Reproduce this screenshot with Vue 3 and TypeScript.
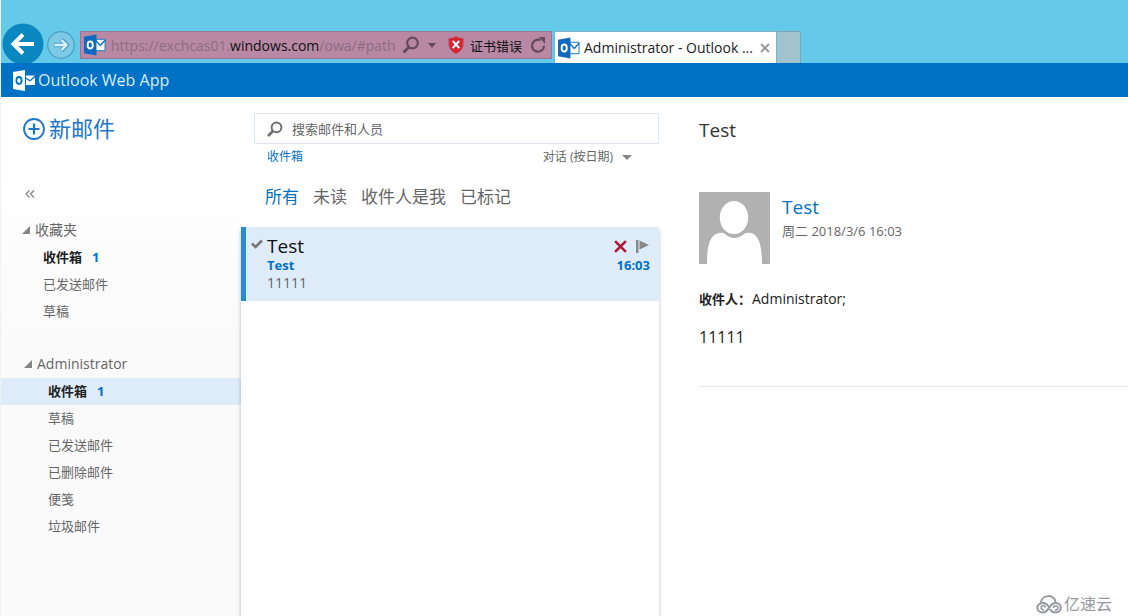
<script setup lang="ts">
import { ref } from 'vue'

interface Folder {
  name: string
  unread?: number
  selected?: boolean
}

interface FolderGroup {
  title: string
  kind: string
  folders: Folder[]
}

const groups: FolderGroup[] = [
  {
    title: '收藏夹',
    kind: 'favorites',
    folders: [{ name: '收件箱', unread: 1 }, { name: '已发送邮件' }, { name: '草稿' }],
  },
  {
    title: 'Administrator',
    kind: 'mailbox',
    folders: [
      { name: '收件箱', unread: 1, selected: true },
      { name: '草稿' },
      { name: '已发送邮件' },
      { name: '已删除邮件' },
      { name: '便笺' },
      { name: '垃圾邮件' },
    ],
  },
]

const filters = ['所有', '未读', '收件人是我', '已标记']
const activeFilter = ref('所有')
const query = ref('')
</script>

<template>
  <div class="window">
    <header class="chrome">
      <button class="back" aria-label="Back">
        <svg width="42" height="40" viewBox="0 0 42 40">
          <circle cx="21" cy="21" r="20.5" fill="#0a86c0" />
          <path d="M32 21H13M21 11.500L11.500 21L21 30.500" fill="none" stroke="#fff" stroke-width="4" />
        </svg>
      </button>
      <button class="forward" aria-label="Forward">
        <svg width="28" height="28" viewBox="0 0 28 28">
          <circle cx="14" cy="14" r="13.300" fill="#7ccae6" stroke="#4ba0c6" stroke-width="1.300" />
          <path d="M7 14H19M14.500 8.500L20 14L14.500 19.500" fill="none" stroke="#4ba0c6" stroke-width="4.400" />
          <path d="M7.500 14H19M14.500 9L19.500 14L14.500 19" fill="none" stroke="#d8f0f8" stroke-width="2.400" />
        </svg>
      </button>
      <div class="address">
        <svg width="22" height="22" viewBox="0 0 23 22">
          <path d="M12 5H22V17H12Z" fill="#fff" stroke="#1371c2" />
          <path d="M12 6L17 11.500L22 6" fill="none" stroke="#1371c2" stroke-width="1.500" />
          <path d="M0 2.500L13 0V22L0 19.500Z" fill="#0f6abf" />
          <ellipse cx="6.500" cy="11" rx="2.700" ry="3.700" fill="none" stroke="#fff" stroke-width="2" />
        </svg>
        <span class="url">https://exchcas01.<b>windows.com</b>/owa/#path</span>
        <button class="icon-button" aria-label="Search">
          <svg width="18" height="18" viewBox="0 0 18 18" fill="none" stroke="#67495d">
            <circle cx="10.500" cy="7" r="5.300" stroke-width="2.200" />
            <path d="M7 11L1.500 16.500" stroke-width="3" />
          </svg>
        </button>
        <button class="icon-button caret-button" aria-label="Show address list">
          <svg width="8" height="5" viewBox="0 0 8 5"><path d="M0 0H8L4 5Z" fill="#67495d" /></svg>
        </button>
        <button class="certificate">
          <svg width="16" height="18" viewBox="0 0 16 18">
            <path d="M8 .5C10 2 12.500 2.500 15 2.500V8C15 12.500 12 15.500 8 17.500C4 15.500 1 12.500 1 8V2.500C3.500 2.500 6 2 8 .5Z" fill="#d92231" stroke="#c8404a" />
            <path d="M4.800 5L11.200 12M11.200 5L4.800 12" stroke="#fff" stroke-width="2" />
          </svg>
          <span>证书错误</span>
        </button>
        <button class="icon-button" aria-label="Refresh">
          <svg width="16" height="17" viewBox="0 0 16 17">
            <path d="M10.500 3.200A6 6 0 1 0 14 8.700" fill="none" stroke="#67495d" stroke-width="2.200" />
            <path d="M9 0H15V7Z" fill="#67495d" />
          </svg>
        </button>
      </div>
      <div class="tab">
        <svg width="22" height="22" viewBox="0 0 23 22">
          <path d="M12 5H22V17H12Z" fill="#fff" stroke="#1371c2" />
          <path d="M12 6L17 11.500L22 6" fill="none" stroke="#1371c2" stroke-width="1.500" />
          <path d="M0 2.500L13 0V22L0 19.500Z" fill="#0f6abf" />
          <ellipse cx="6.500" cy="11" rx="2.700" ry="3.700" fill="none" stroke="#fff" stroke-width="2" />
        </svg>
        <span class="tab-title">Administrator - Outlook ...</span>
        <button class="icon-button" aria-label="Close tab">
          <svg width="10" height="10" viewBox="0 0 10 10">
            <path d="M1 1L9 9M9 1L1 9" stroke="#9b9b9b" stroke-width="2" />
          </svg>
        </button>
      </div>
      <button class="new-tab" aria-label="New tab"></button>
    </header>

    <div class="brand">
      <svg width="22" height="21" viewBox="0 0 22 21">
        <path d="M0 2L12 0V21L0 19Z" fill="#fff" />
        <ellipse cx="6" cy="10.500" rx="2.600" ry="3.500" fill="none" stroke="#0072c6" stroke-width="1.800" />
        <path d="M13 5.500H22L17 10L13 7.500Z" fill="#fff" />
        <path d="M13 9L17 11.500L22 7.500V15H13Z" fill="#fff" />
      </svg>
      <span>Outlook Web App</span>
    </div>

    <main class="mail">
      <nav class="sidebar">
        <button class="compose">
          <svg width="24" height="24" viewBox="0 0 24 24" fill="none" stroke="#1b78cd">
            <circle cx="12" cy="13" r="10" stroke-width="1.800" />
            <path d="M12 7.500V18.500M6.500 13H17.500" stroke-width="2.200" />
          </svg>
          <span>新邮件</span>
        </button>
        <button class="collapse" aria-label="Collapse">
          <svg width="10" height="8" viewBox="0 0 10 8">
            <path d="M4.500 .5L1 4L4.500 7.500M9 .5L5.500 4L9 7.500" fill="none" stroke="#858585" stroke-width="1.300" />
          </svg>
        </button>
        <section v-for="group in groups" :key="group.kind" class="group" :class="group.kind">
          <h2>
            <svg width="8" height="8" viewBox="0 0 8 8"><path d="M8 0V8H0Z" fill="#858585" /></svg>
            {{ group.title }}
          </h2>
          <ul>
            <li v-for="folder in group.folders" :key="folder.name">
              <a href="#" :class="{ unread: folder.unread, selected: folder.selected }">
                {{ folder.name }}<span v-if="folder.unread" class="count">{{ folder.unread }}</span>
              </a>
            </li>
          </ul>
        </section>
      </nav>

      <section class="list">
        <label class="search">
          <svg width="16" height="16" viewBox="0 0 16 16" fill="none" stroke="#707070">
            <circle cx="9.500" cy="6.300" r="4.900" stroke-width="2" />
            <path d="M6 10L1 15" stroke-width="2.600" />
          </svg>
          <input v-model="query" type="text" placeholder="搜索邮件和人员" aria-label="搜索邮件和人员" />
        </label>
        <div class="list-head">
          <a href="#">收件箱</a>
          <button class="sort">
            对话 (按日期)
            <svg width="10" height="5" viewBox="0 0 10 5"><path d="M0 0H10L5 5Z" fill="#858585" /></svg>
          </button>
        </div>
        <div class="filters">
          <button
            v-for="filter in filters"
            :key="filter"
            :class="{ active: filter === activeFilter }"
            @click="activeFilter = filter"
          >{{ filter }}</button>
        </div>
        <div class="messages">
          <article class="message">
            <svg class="check" width="12" height="10" viewBox="0 0 12 10">
              <path d="M1 4.500L4.500 8L11 1.500" fill="none" stroke="#777" stroke-width="2.600" />
            </svg>
            <div class="summary">
              <h3>Test</h3>
              <strong>Test</strong>
              <p>11111</p>
            </div>
            <div class="meta">
              <div class="actions">
                <button class="icon-button" aria-label="Delete">
                  <svg width="13" height="13" viewBox="0 0 12 12">
                    <path d="M1 1L11 11M11 1L1 11" stroke="#ac1a38" stroke-width="2.400" />
                  </svg>
                </button>
                <button class="icon-button" aria-label="Flag">
                  <svg width="13" height="13" viewBox="0 0 13 13" fill="#888">
                    <path d="M0 0H2.500V13H0ZM3.500 .5L13 5L3.500 9.500Z" />
                  </svg>
                </button>
              </div>
              <time>16:03</time>
            </div>
          </article>
        </div>
      </section>

      <section class="reading">
        <h1>Test</h1>
        <div class="sender">
          <svg width="71" height="72" viewBox="0 0 71 72">
            <path d="M0 0H71V72H0Z" fill="#b1b1b1" />
            <path d="M8 72C8 56 10 43 20 41Q24 40 26 42Q35 50 45 42Q48 40 52 41C61 43 63 57 63 72Z" fill="#fff" />
            <ellipse cx="35" cy="25.500" rx="14.200" ry="16.500" fill="#fff" />
          </svg>
          <div>
            <a href="#">Test</a>
            <time>周二 2018/3/6 16:03</time>
          </div>
        </div>
        <p class="recipients"><b>收件人：</b><span>Administrator;</span></p>
        <p class="body">11111</p>
      </section>
    </main>

    <div class="watermark">
      <svg width="26" height="19" viewBox="0 0 26 19" fill="none" stroke="#9499a0" stroke-width="2">
        <path d="M5 8C5 -1 19 -1 19.500 7" />
        <path d="M13 12C11 9 9 8 7 8C-.5 8 -.5 17.500 7 17.500C13 17.500 13 8 19.500 8C26.500 8 26.500 17.500 19.500 17.500C17 17.500 15 16 14 14" />
        <path d="M9.500 12.500A2.200 2.200 0 1 0 8 14.800M17.500 13A2.200 2.200 0 1 1 19 15" stroke-width="1.600" />
      </svg>
      <span>亿速云</span>
    </div>
  </div>
</template>

<style>
body {
  margin: 0;
  background: #fff;
}
</style>

<style scoped>
.window {
  position: relative;
  box-sizing: border-box;
  display: flex;
  flex-direction: column;
  min-height: 100vh;
  overflow: hidden;
  border-left: 1px solid #eef3f6;
  font-family: "Open Sans", "Noto Sans CJK SC", sans-serif;
  font-size: 14px;
  color: #666;
}
button {
  padding: 0;
  border: 0;
  background: none;
  font: inherit;
  color: inherit;
  cursor: pointer;
}
a {
  color: #0072c6;
  text-decoration: none;
}
h1, h2, h3, p, ul {
  margin: 0;
  padding: 0;
  font-weight: 400;
  list-style: none;
}
svg {
  display: block;
  flex: none;
}
.chrome {
  display: flex;
  align-items: flex-end;
  height: 63px;
  padding-left: 1px;
  background: #65caea;
}
.forward {
  margin: 0 5px 4px 3px;
}
.address {
  box-sizing: border-box;
  display: flex;
  align-items: center;
  width: 472px;
  height: 28px;
  margin: 0 2px 4px 0;
  padding: 0 5px 0 3px;
  border: 1px solid #9b7796;
  background: #b888a5;
}
.url {
  flex: 1;
  margin-left: 5px;
  color: #8d6d82;
  white-space: nowrap;
}
.url b {
  font-weight: 400;
  color: #111;
}
.caret-button {
  margin: 0 12px 0 8px;
}
.certificate {
  display: flex;
  align-items: center;
  gap: 6px;
  margin-right: 8px;
  font-size: 13px;
  color: #111;
}
.tab {
  box-sizing: border-box;
  display: flex;
  align-items: center;
  width: 223px;
  height: 32px;
  padding: 0 6px 0 3px;
  border: 1px solid #7fb4c8;
  border-bottom: 0;
  background: #fff;
}
.tab-title {
  flex: 1;
  margin-left: 4px;
  color: #222;
  white-space: nowrap;
}
.new-tab {
  box-sizing: border-box;
  width: 24px;
  height: 32px;
  border: 1px solid #7da6b4;
  border-width: 1px 1px 0 0;
  background: #a2c3cd;
}
.brand {
  display: flex;
  align-items: center;
  gap: 3px;
  height: 34px;
  padding-left: 12px;
  background: #0072c6;
  font-size: 16px;
  color: #dcecf8;
}
.mail {
  flex: 1;
  display: grid;
  grid-template-columns: 240px 418px 1fr;
}
.sidebar {
  padding-top: 15px;
  background: linear-gradient(#fff 60px, #fafafa 240px);
}
.compose {
  display: flex;
  align-items: center;
  gap: 3px;
  margin-left: 21px;
  font-size: 22px;
  line-height: 32px;
  color: #1b78cd;
}
.collapse {
  display: block;
  margin: 46px 0 0 24px;
}
.group {
  line-height: 27px;
}
.favorites {
  margin-top: 18px;
}
.mailbox {
  margin-top: 25px;
}
.group h2 {
  display: flex;
  align-items: center;
  gap: 5px;
  padding-left: 21px;
  font-size: 14px;
  line-height: 28px;
}
.group a {
  display: block;
  padding-left: 42px;
  font-size: 13px;
  color: #666;
}
.mailbox h2 {
  padding-left: 23px;
}
.mailbox a {
  padding-left: 47px;
}
.group a.unread {
  font-weight: 700;
  color: #222;
}
.group a.selected {
  background: #deebf8;
}
.group .count {
  margin-left: 10px;
  color: #0072c6;
}
.list {
  display: flex;
  flex-direction: column;
  padding-top: 16px;
}
.search {
  display: flex;
  align-items: center;
  gap: 9px;
  height: 29px;
  margin-left: 13px;
  padding-left: 12px;
  border: 1px solid #dde6f5;
}
.search input {
  flex: 1;
  min-width: 0;
  padding: 0;
  border: 0;
  outline: 0;
  background: none;
  font: inherit;
  font-size: 13px;
  color: #666;
}
.search input::placeholder {
  color: #666;
  opacity: 1;
}
.list-head {
  display: flex;
  justify-content: space-between;
  padding: 0 27px 0 26px;
  font-size: 12px;
  line-height: 26px;
}
.sort {
  display: flex;
  align-items: center;
  gap: 9px;
}
.filters {
  display: flex;
  gap: 14px;
  margin-top: 13px;
  padding-left: 24px;
  font-size: 17px;
  line-height: 28px;
}
.filters .active {
  color: #0072c6;
}
.messages {
  flex: 1;
  margin-top: 16px;
  box-shadow: 0 3px 4px rgba(0, 0, 0, 0.25);
}
.message {
  display: flex;
  padding: 8px 9px 9px 5px;
  border-left: 5px solid #2a8dd4;
  background: #deebf8;
}
.check {
  margin: 4px 4px 0 0;
}
.summary {
  flex: 1;
}
.message h3 {
  font-size: 19px;
  line-height: 22px;
  color: #111;
}
.message strong,
.message time {
  display: block;
  font-size: 13px;
  font-weight: 700;
  line-height: 17px;
  color: #0072c6;
}
.message p {
  line-height: 18px;
}
.meta {
  text-align: right;
}
.actions {
  display: flex;
  align-items: center;
  justify-content: flex-end;
  gap: 9px;
  height: 22px;
  padding-right: 1px;
}
.reading {
  padding: 20px 0 0 40px;
  color: #222;
}
.reading h1 {
  font-size: 19px;
  line-height: 26px;
  color: #333;
}
.sender {
  display: flex;
  gap: 12px;
  margin-top: 49px;
}
.sender a {
  display: block;
  margin-top: 3px;
  font-size: 19px;
  line-height: 24px;
}
.sender time {
  font-size: 13px;
  line-height: 24px;
  color: #666;
}
.recipients {
  display: flex;
  gap: 1px;
  margin-top: 24px;
  font-size: 14px;
  line-height: 22px;
}
.recipients b {
  font-size: 13px;
}
.body {
  padding-bottom: 37px;
  margin-top: 15px;
  border-bottom: 1px solid #e8e8e8;
  font-size: 16px;
  line-height: 24px;
}
.watermark {
  position: absolute;
  right: 16px;
  bottom: 1px;
  display: flex;
  align-items: center;
  gap: 2px;
  font-size: 16px;
  line-height: 22px;
  color: #9499a0;
}
</style>
